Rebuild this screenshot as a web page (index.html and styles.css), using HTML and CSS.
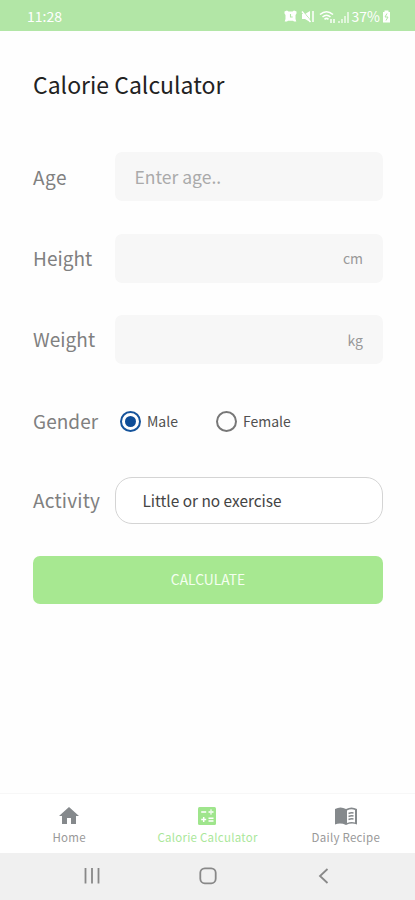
FILE: index.html
```
<!DOCTYPE html>
<html lang="en">
<head>
<meta charset="utf-8">
<meta name="viewport" content="width=device-width, initial-scale=1">
<title>Calorie Calculator</title>
<link rel="stylesheet" href="styles.css">
</head>
<body>
<header class="status">
  <span class="clock">11:28</span>
  <div class="status-icons">
    <svg width="13" height="13" viewBox="0 0 13 13"><path d="M.5 1.500L3 .5l1.500 1h4l1.500-1 2.500 1v2l-1 1.500v4l.8 2.500h-2.300l-1-.7h-5l-1 .7H.7L1.500 9V5l-1-1.500z" fill="#fff"/><path d="M6.500 4v3h2.200" fill="none" stroke="#b2e6a6" stroke-width="1.100"/></svg>
    <svg width="14" height="13" viewBox="0 0 14 13"><path d="M1 4h3l5-3v11L4 9H1z" fill="#fff"/><path d="M2 1l8 10" stroke="#b2e6a6" stroke-width="1"/><path d="M1 1.500l8.500 10.500M12 1v11" stroke="#fff" stroke-width="1.500"/></svg>
    <svg class="signal" width="31" height="14" viewBox="0 0 31 14" fill="none" stroke="#fff"><path d="M1 4.500Q7.500-1 14 4.500M3.500 7Q7.500 3.500 11.500 7M5.500 9.300Q7.500 7.500 9.500 9.300" stroke-width="1.600"/><path d="M12 13V9M15 13V9" stroke-width="1.400"/><path d="M20 13v-2M23 13V9M26 13V6M29 13V2" stroke-width="1.700" opacity=".7"/></svg>
    <span class="percent">37%</span>
    <svg width="9" height="13" viewBox="0 0 9 13"><path d="M2.500 2V.5h4V2H8v10.500H1V2z" fill="#fff"/><path d="M5 3.500L3 7h3l-2 3.500" fill="none" stroke="#b2e6a6"/></svg>
  </div>
</header>
<main class="content">
  <h1>Calorie Calculator</h1>
  <div class="row"><span class="label age">Age</span><div class="field"><span class="placeholder">Enter age..</span></div></div>
  <div class="row"><span class="label">Height</span><div class="field unit"><span>cm</span></div></div>
  <div class="row"><span class="label">Weight</span><div class="field unit"><span>kg</span></div></div>
  <div class="row gender-row"><span class="label">Gender</span>
    <div class="options">
      <span class="option male"><i class="radio selected"></i><span>Male</span></span>
      <span class="option"><i class="radio"></i><span>Female</span></span>
    </div>
  </div>
  <div class="row activity-row"><span class="label activity">Activity</span><div class="select"><span>Little or no exercise</span></div></div>
  <div class="calculate"><span>CALCULATE</span></div>
</main>
<nav class="tabs">
  <div class="tab">
    <svg width="24" height="24" viewBox="0 0 24 24"><path d="M10 20v-6h4v6h5v-8h3L12 3 2 12h3v8z" fill="#85898c"/></svg>
    <span>Home</span>
  </div>
  <div class="tab current">
    <svg width="24" height="24" viewBox="0 0 24 24"><rect x="3" y="3" width="18" height="18" rx="1.500" fill="#9fe58c"/><path d="M6.200 8h5M13.500 8h5M16 5.500v1.200M16 9.300v1.200M6.200 15.500h5M8.700 13v5M13.500 14.300h5M13.500 17h5" stroke="#fff" stroke-width="1.500"/></svg>
    <span>Calorie Calculator</span>
  </div>
  <div class="tab">
    <svg width="24" height="24" viewBox="0 0 24 24"><path d="M1 5Q6.500 2 12 5q5.500-3 11 0v15.500q-5.500-2-11 .5Q6.500 18.500 1 20.500z" fill="#85898c"/><path d="M13 6.500q4-2 8-.5v12.500q-4-1-8 .5z" fill="#fff"/><path d="M14.500 9.500q2.500-1 5-.5M14.500 12.500q2.500-1 5-.5M14.500 15.500q2.500-1 5-.5" fill="none" stroke="#85898c" stroke-width="1.500"/></svg>
    <span>Daily Recipe</span>
  </div>
</nav>
<footer class="system">
  <svg width="18" height="18" viewBox="0 0 18 18"><path d="M2.500 1v15.500M9 1v15.500M15.500 1v15.500" stroke="#888" stroke-width="1.800"/></svg>
  <svg width="18" height="18" viewBox="0 0 18 18"><rect x="1.300" y="1.300" width="15.400" height="15" rx="4.500" fill="none" stroke="#888" stroke-width="1.800"/></svg>
  <svg width="18" height="18" viewBox="0 0 18 18"><path d="M13.500 2L6 9l7.500 7" fill="none" stroke="#888" stroke-width="1.800"/></svg>
</footer>
</body>
</html>
```
FILE: styles.css
```
* { box-sizing: border-box; }
body {
  margin: 0;
  height: 900px;
  display: flex;
  flex-direction: column;
  background: #fefefe;
  color: #808080;
  font-family: "Noto Sans CJK KR", "Noto Sans", sans-serif;
  line-height: 1;
  white-space: nowrap;
}
svg { display: block; flex: none; }
.status {
  height: 31px;
  padding: 2px 24px 0 27px;
  display: flex;
  align-items: center;
  justify-content: space-between;
  background: #b2e6a6;
  color: #fff;
  font-size: 14px;
}
.clock, .percent { padding-bottom: 2px; }
.status-icons { display: flex; align-items: center; gap: 4px; }
.percent { margin-left: -2px; margin-right: -2px; }
.content { flex: 1; padding: 0 32px 0 33px; }
h1 {
  margin: 40px 0 55px;
  height: 26px;
  line-height: 26px;
  color: #222;
  font-size: 23px;
  font-weight: 400;
}
.row { display: flex; align-items: center; height: 49px; margin-bottom: 32.500px; }
.label { width: 81px; flex: none; padding-bottom: 2px; font-size: 19px; letter-spacing: .05px; }
.age { padding-bottom: 0; letter-spacing: .5px; }
.activity { letter-spacing: .2px; }
.field {
  flex: 1;
  height: 49px;
  padding: 0 20px;
  margin-left: .5px;
  display: flex;
  align-items: center;
  border-radius: 7px;
  background: #f7f7f7;
}
.placeholder { color: #aaa; font-size: 17.500px; }
.unit { justify-content: flex-end; color: #999; font-size: 14px; }
.gender-row { margin-bottom: 30px; }
.options { display: flex; padding-left: 6px; color: #505050; font-size: 14px; }
.option { display: flex; align-items: center; gap: 6px; }
.male { width: 96px; }
.radio { width: 21px; height: 21px; flex: none; border: 2px solid #777; border-radius: 50%; display: grid; place-items: center; }
.selected { border-color: #15539b; }
.selected::after { content: ""; width: 11px; height: 11px; border-radius: 50%; background: #0d4c97; }
.activity-row { margin-bottom: 31px; }
.select {
  flex: 1;
  height: 47px;
  padding: 1px 27px 0;
  margin-left: .5px;
  display: flex;
  align-items: center;
  border: 1.500px solid #d4d4d4;
  border-radius: 17px;
  background: #fff;
  color: #444;
  font-size: 15.400px;
}
.calculate {
  height: 48px;
  padding-top: 1px;
  display: flex;
  align-items: center;
  justify-content: center;
  border-radius: 7px;
  background: #a7e891;
  color: #f5fff0;
  font-size: 13.800px;
}
.tabs {
  height: 60px;
  display: grid;
  grid-template-columns: repeat(3, 1fr);
  border-top: 1px solid #f7f7f7;
  background: #fff;
  color: #999;
  font-size: 11.500px;
  letter-spacing: .25px;
}
.tab { display: flex; flex-direction: column; align-items: center; padding-top: 10px; gap: 4px; }
.current { color: #aae79a; }
.system {
  height: 47px;
  padding: 0 83px 2px;
  display: flex;
  align-items: center;
  justify-content: space-between;
  background: #f0f0f0;
}
```
